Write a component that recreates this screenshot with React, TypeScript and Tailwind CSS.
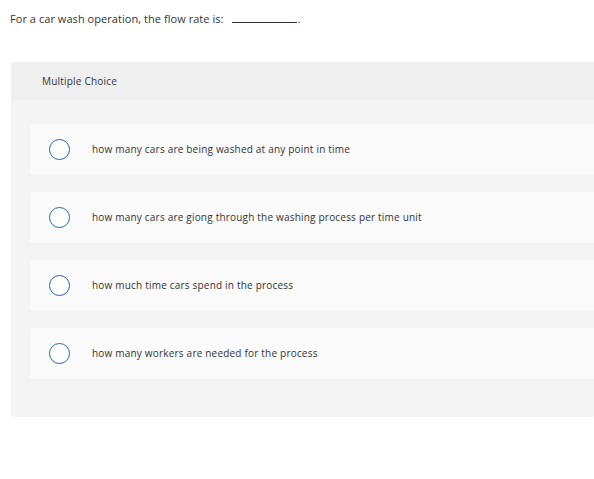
const options = [
  'how many cars are being washed at any point in time',
  'how many cars are giong through the washing process per time unit',
  'how much time cars spend in the process',
  'how many workers are needed for the process',
];

export default function App() {
  return (
    <div className="min-h-[479px] bg-white text-[#333] font-['Open_Sans','Liberation_Sans',sans-serif]">
      <p className="pl-[10px] pt-[12px] text-[11px] leading-[14px] tracking-[0.05px]">
        For a car wash operation, the flow rate is:{' '}
        <span className="inline-block w-[65px] border-b border-[#333] align-baseline ml-[6px]"></span>.
      </p>
      <div className="ml-[11px] mt-[36px] bg-[#f4f4f4] rounded-[2px] pb-[38px]">
        <div className="h-[38px] flex items-center pl-[31px] bg-[#efefef] text-[10px] tracking-[0.2px]">Multiple Choice</div>
        <ul className="pl-[19px] pt-[24px] flex flex-col gap-[17px]">
          {options.map((opt) => (
            <li key={opt} className="h-[51px] flex items-center bg-[#fafafa] rounded-l-[3px]">
              <span className="ml-[19px] w-[21px] h-[21px] rounded-full border-[1.5px] border-[#2467a6] bg-white shrink-0"></span>
              <span className="ml-[22px] text-[10px] tracking-[0.2px]">{opt}</span>
            </li>
          ))}
        </ul>
      </div>
    </div>
  );
}
